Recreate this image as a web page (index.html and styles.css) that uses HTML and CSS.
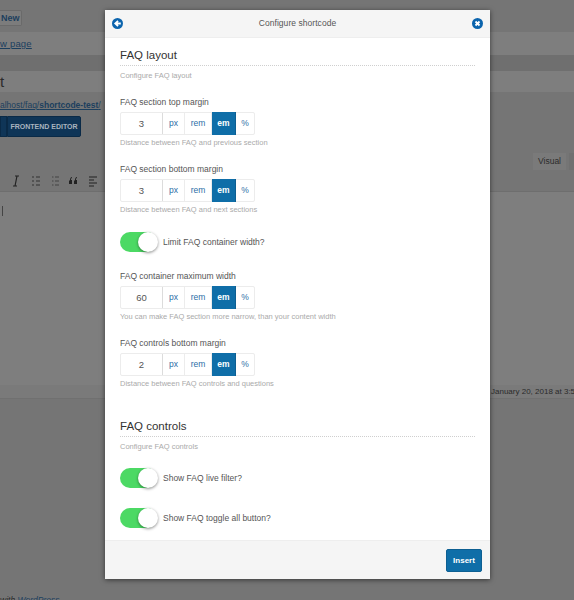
FILE: index.html
```html
<!DOCTYPE html>
<html>
  <head>
    <meta charset="utf-8" />
    <title>Configure shortcode</title>
    <link rel="stylesheet" href="styles.css">
  </head>
  <body>
    <!-- dimmed editor page behind the modal -->
    <div class="backdrop">
      <div class="bar-top"><span class="add-new">New</span></div>
      <div class="bar-notice"><a class="dim-link">w page</a></div>
      <div class="bar-dark"></div>
      <div class="title-input">t</div>
      <div class="permalink">alhost/faq/<b>shortcode-test</b>/</div>
      <div class="builder-row">
        <span class="builder-btn small"></span>
        <span class="builder-btn">FRONTEND EDITOR</span>
      </div>
      <div class="tabs-row"><span class="tab">Visual</span><span class="tab-next"></span></div>
      <div class="toolbar">
        <svg class="toolbar-icons" width="110" height="14" viewBox="0 0 110 14">
          <path d="M15 2h4M13 12h4M17 2l-2 10" stroke="#222" stroke-width="1.2" fill="none" />
          <path d="M36 3h4M36 7h4M36 11h4M32 3h2M32 7h2M32 11h2" stroke="#333" stroke-width="1.1" fill="none" />
          <path d="M55 3h4M55 7h4M55 11h4M52 3h1.5M52 7h1.5M52 11h1.5" stroke="#444" stroke-width="1" fill="none" />
          <path d="M70 6c0-2 1-3 2-3v1c-1 0-1 1-1 2h1v4h-3V7zM75 6c0-2 1-3 2-3v1c-1 0-1 1-1 2h1v4h-3V7z" fill="#222" />
          <path d="M89 3h8M89 6h5M89 9h8M89 12h5" stroke="#222" stroke-width="1.2" fill="none" />
        </svg>
      </div>
      <div class="editor"><span class="caret"></span></div>
      <div class="status-row">January 20, 2018 at 3:58</div>
      <div class="credit">with <a class="dim-link">WordPress</a></div>
    </div>

    <div class="modal">
      <header class="modal-head">
        <svg class="head-icon" width="11" height="11" viewBox="0 0 12 12">
          <circle cx="6" cy="6" r="6" fill="#0b64ad" />
          <path d="M9.6 6H4.6M6.6 3.2L3.6 6l3 2.8" stroke="#fff" stroke-width="2" fill="none" />
        </svg>
        <span class="modal-title">Configure shortcode</span>
        <svg class="head-icon" width="11" height="11" viewBox="0 0 12 12">
          <circle cx="6" cy="6" r="6" fill="#0b64ad" />
          <path d="M3.8 3.8l4.4 4.4M8.2 3.8L3.8 8.2" stroke="#fff" stroke-width="2" fill="none" />
        </svg>
      </header>

      <div class="modal-body">
        <section class="group">
          <h2>FAQ layout</h2>
          <p class="hint group-hint">Configure FAQ layout</p>
        </section>

        <div class="field first">
          <label>FAQ section top margin</label>
          <div class="unit-input">
            <span class="value">3</span>
            <span class="unit u-px">px</span><span class="unit u-rem">rem</span><span class="unit u-em active">em</span><span class="unit u-pc">%</span>
          </div>
          <p class="hint">Distance between FAQ and previous section</p>
        </div>

        <div class="field">
          <label>FAQ section bottom margin</label>
          <div class="unit-input">
            <span class="value">3</span>
            <span class="unit u-px">px</span><span class="unit u-rem">rem</span><span class="unit u-em active">em</span><span class="unit u-pc">%</span>
          </div>
          <p class="hint">Distance between FAQ and next sections</p>
        </div>

        <div class="switch-row limit">
          <span class="switch"><span class="knob"></span></span>
          <span class="switch-label">Limit FAQ container width?</span>
        </div>

        <div class="field after-switch">
          <label>FAQ container maximum width</label>
          <div class="unit-input">
            <span class="value">60</span>
            <span class="unit u-px">px</span><span class="unit u-rem">rem</span><span class="unit u-em active">em</span><span class="unit u-pc">%</span>
          </div>
          <p class="hint">You can make FAQ section more narrow, than your content width</p>
        </div>

        <div class="field">
          <label>FAQ controls bottom margin</label>
          <div class="unit-input">
            <span class="value">2</span>
            <span class="unit u-px">px</span><span class="unit u-rem">rem</span><span class="unit u-em active">em</span><span class="unit u-pc">%</span>
          </div>
          <p class="hint">Distance between FAQ controls and questions</p>
        </div>

        <section class="group second">
          <h2>FAQ controls</h2>
          <p class="hint group-hint">Configure FAQ controls</p>
        </section>

        <div class="switch-row filter">
          <span class="switch"><span class="knob"></span></span>
          <span class="switch-label">Show FAQ live filter?</span>
        </div>
        <div class="switch-row toggle">
          <span class="switch"><span class="knob"></span></span>
          <span class="switch-label">Show FAQ toggle all button?</span>
        </div>
      </div>

      <footer class="modal-foot">
        <button class="insert">Insert</button>
      </footer>
    </div>
  </body>
</html>
```

FILE: styles.css
```css
* {
  box-sizing: border-box;
}

html,
body {
  margin: 0;
  height: 600px;
  overflow: hidden;
}

body {
  background: #757575;
  font-family: "Liberation Sans", Arial, sans-serif;
  color: #555;
}

/* backdrop */
.backdrop {
  height: 600px;
  overflow: hidden;
  display: flex;
  flex-direction: column;
  color: #2b2b2b;
}

.dim-link {
  color: #1c3f5e;
  text-decoration: underline;
}

.bar-top {
  height: 32px;
  padding-top: 10px;
}

.add-new {
  display: block;
  width: 22px;
  height: 16px;
  background: #7c7c7c;
  border: 1px solid #6a6a6a;
  border-left: 0;
  font-size: 9px;
  font-weight: 700;
  line-height: 14px;
  color: #1c3f5e;
  padding-left: 1px;
  border-radius: 0 2px 2px 0;
}

.bar-notice {
  height: 23px;
  background: #7e7e7e;
  font-size: 9.5px;
  line-height: 24px;
  letter-spacing: 0.2px;
}

.bar-dark {
  height: 16px;
  background: #6f6f6f;
}

.title-input {
  height: 21px;
  background: #7e7e7e;
  font-size: 15px;
  line-height: 21px;
}

.permalink {
  height: 24px;
  padding-top: 5px;
  font-size: 8.5px;
  line-height: 16px;
  color: #1c3f5e;
  text-decoration: underline;
}

.builder-row {
  height: 21px;
  display: flex;
}

.builder-btn {
  width: 74px;
  height: 21px;
  background: #0f3557;
  border: 1px solid #0a2a47;
  border-radius: 0 2px 2px 0;
  color: #a9b4bf;
  font-size: 7px;
  font-weight: 700;
  line-height: 19px;
  text-align: center;
  white-space: nowrap;
}

.builder-btn.small {
  width: 7px;
  border-radius: 0;
}

.tabs-row {
  height: 33px;
  display: flex;
  justify-content: flex-end;
  align-items: flex-end;
}

.tab {
  width: 33px;
  height: 17px;
  background: #7a7a7a;
  font-size: 8.5px;
  line-height: 17px;
  text-align: center;
}

.tab-next {
  width: 5px;
  height: 17px;
  margin-left: 3px;
  background: #707070;
}

.toolbar {
  height: 22px;
  background: #757575;
  border-bottom: 1px solid #6e6e6e;
}

.toolbar-icons {
  display: block;
  margin-top: 4px;
}

.editor {
  height: 193px;
  background: #7e7e7e;
  padding-top: 14px;
}

.caret {
  display: block;
  width: 1px;
  height: 10px;
  margin-left: 2px;
  background: #444;
}

.status-row {
  height: 14px;
  background: #7a7a7a;
  border-bottom: 1px solid #707070;
  padding-left: 491px;
  font-size: 8px;
  line-height: 14px;
  white-space: nowrap;
  overflow: hidden;
}

.credit {
  margin-top: auto;
  margin-bottom: -6px;
  font-size: 8.5px;
  font-style: italic;
  line-height: 12px;
}

/* modal */
.modal {
  position: absolute;
  left: 105px;
  top: 10px;
  width: 385px;
  height: 569px;
  background: #fff;
  display: flex;
  flex-direction: column;
  box-shadow: 0 1px 5px rgba(0, 0, 0, 0.55);
}

.modal-head {
  height: 28px;
  flex: none;
  background: #f5f5f5;
  border-bottom: 1px solid #eeeeee;
  display: flex;
  align-items: center;
  justify-content: space-between;
  padding: 0 7px 1px 7px;
}

.head-icon {
  display: block;
}

.modal-title {
  font-size: 8.5px;
  letter-spacing: 0.05px;
  color: #555;
}

.modal-body {
  flex: 1;
  padding: 0 15px;
  overflow: hidden;
}

.group h2 {
  margin: 0;
  padding-top: 9px;
  height: 28px;
  font-size: 11.5px;
  line-height: 17px;
  font-weight: 400;
  color: #333;
  border-bottom: 1px dotted #cfcfcf;
}

.hint {
  margin: 0;
  font-size: 7.5px;
  line-height: 12px;
  color: #aaa;
}

.group-hint {
  margin-top: 4px;
}

.group.second {
  margin-top: 19px;
}

.field {
  margin-top: 14px;
}

.field.first {
  margin-top: 14px;
}

.field.after-switch {
  margin-top: 18px;
}

.field label {
  display: block;
  font-size: 8.5px;
  line-height: 12px;
  color: #555;
  margin-bottom: 4px;
}

.unit-input {
  display: flex;
  width: 135px;
  height: 23px;
  border: 1px solid #ececec;
  border-radius: 2px;
}

.value {
  width: 42px;
  text-align: center;
  font-size: 9.5px;
  line-height: 21px;
  color: #555;
  border-right: 1px solid #dcdcdc;
}

.unit {
  font-size: 8.5px;
  line-height: 21px;
  text-align: center;
  color: #2c6ea6;
  border-right: 1px solid #ececec;
}

.u-px {
  width: 22px;
}

.u-rem {
  width: 27px;
}

.u-em {
  width: 24px;
}

.u-pc {
  flex: 1;
  border-right: 0;
}

.unit.active {
  background: #0f6ea8;
  color: #fff;
  font-weight: 700;
  margin: -1px 0;
  line-height: 23px;
  border-right: 1px solid #0d5f92;
}

.field .hint {
  margin-top: 2px;
}

.switch-row {
  display: flex;
  align-items: center;
  gap: 6px;
}

.switch-row.limit {
  margin-top: 16px;
}

.switch-row.filter {
  margin-top: 15px;
}

.switch-row.toggle {
  margin-top: 20px;
}

.switch {
  display: block;
  position: relative;
  width: 37px;
  height: 20px;
  border-radius: 10px;
  background: #4cd964;
}

.knob {
  position: absolute;
  right: -0.5px;
  top: 0;
  width: 20px;
  height: 20px;
  border-radius: 50%;
  background: #fff;
  box-shadow: 0 1px 3px rgba(0, 0, 0, 0.45);
}

.switch-label {
  font-size: 8.5px;
  color: #555;
}

.modal-foot {
  height: 39px;
  flex: none;
  background: #f5f5f5;
  border-top: 1px solid #eeeeee;
  display: flex;
  justify-content: flex-end;
  align-items: flex-start;
  padding: 8px 8px 0 0;
}

.insert {
  width: 36px;
  height: 23px;
  padding: 0;
  background: #0f6ea8;
  border: 1px solid #0d5f92;
  border-radius: 2px;
  color: #fff;
  font-family: inherit;
  font-size: 8px;
  font-weight: 700;
}
```
